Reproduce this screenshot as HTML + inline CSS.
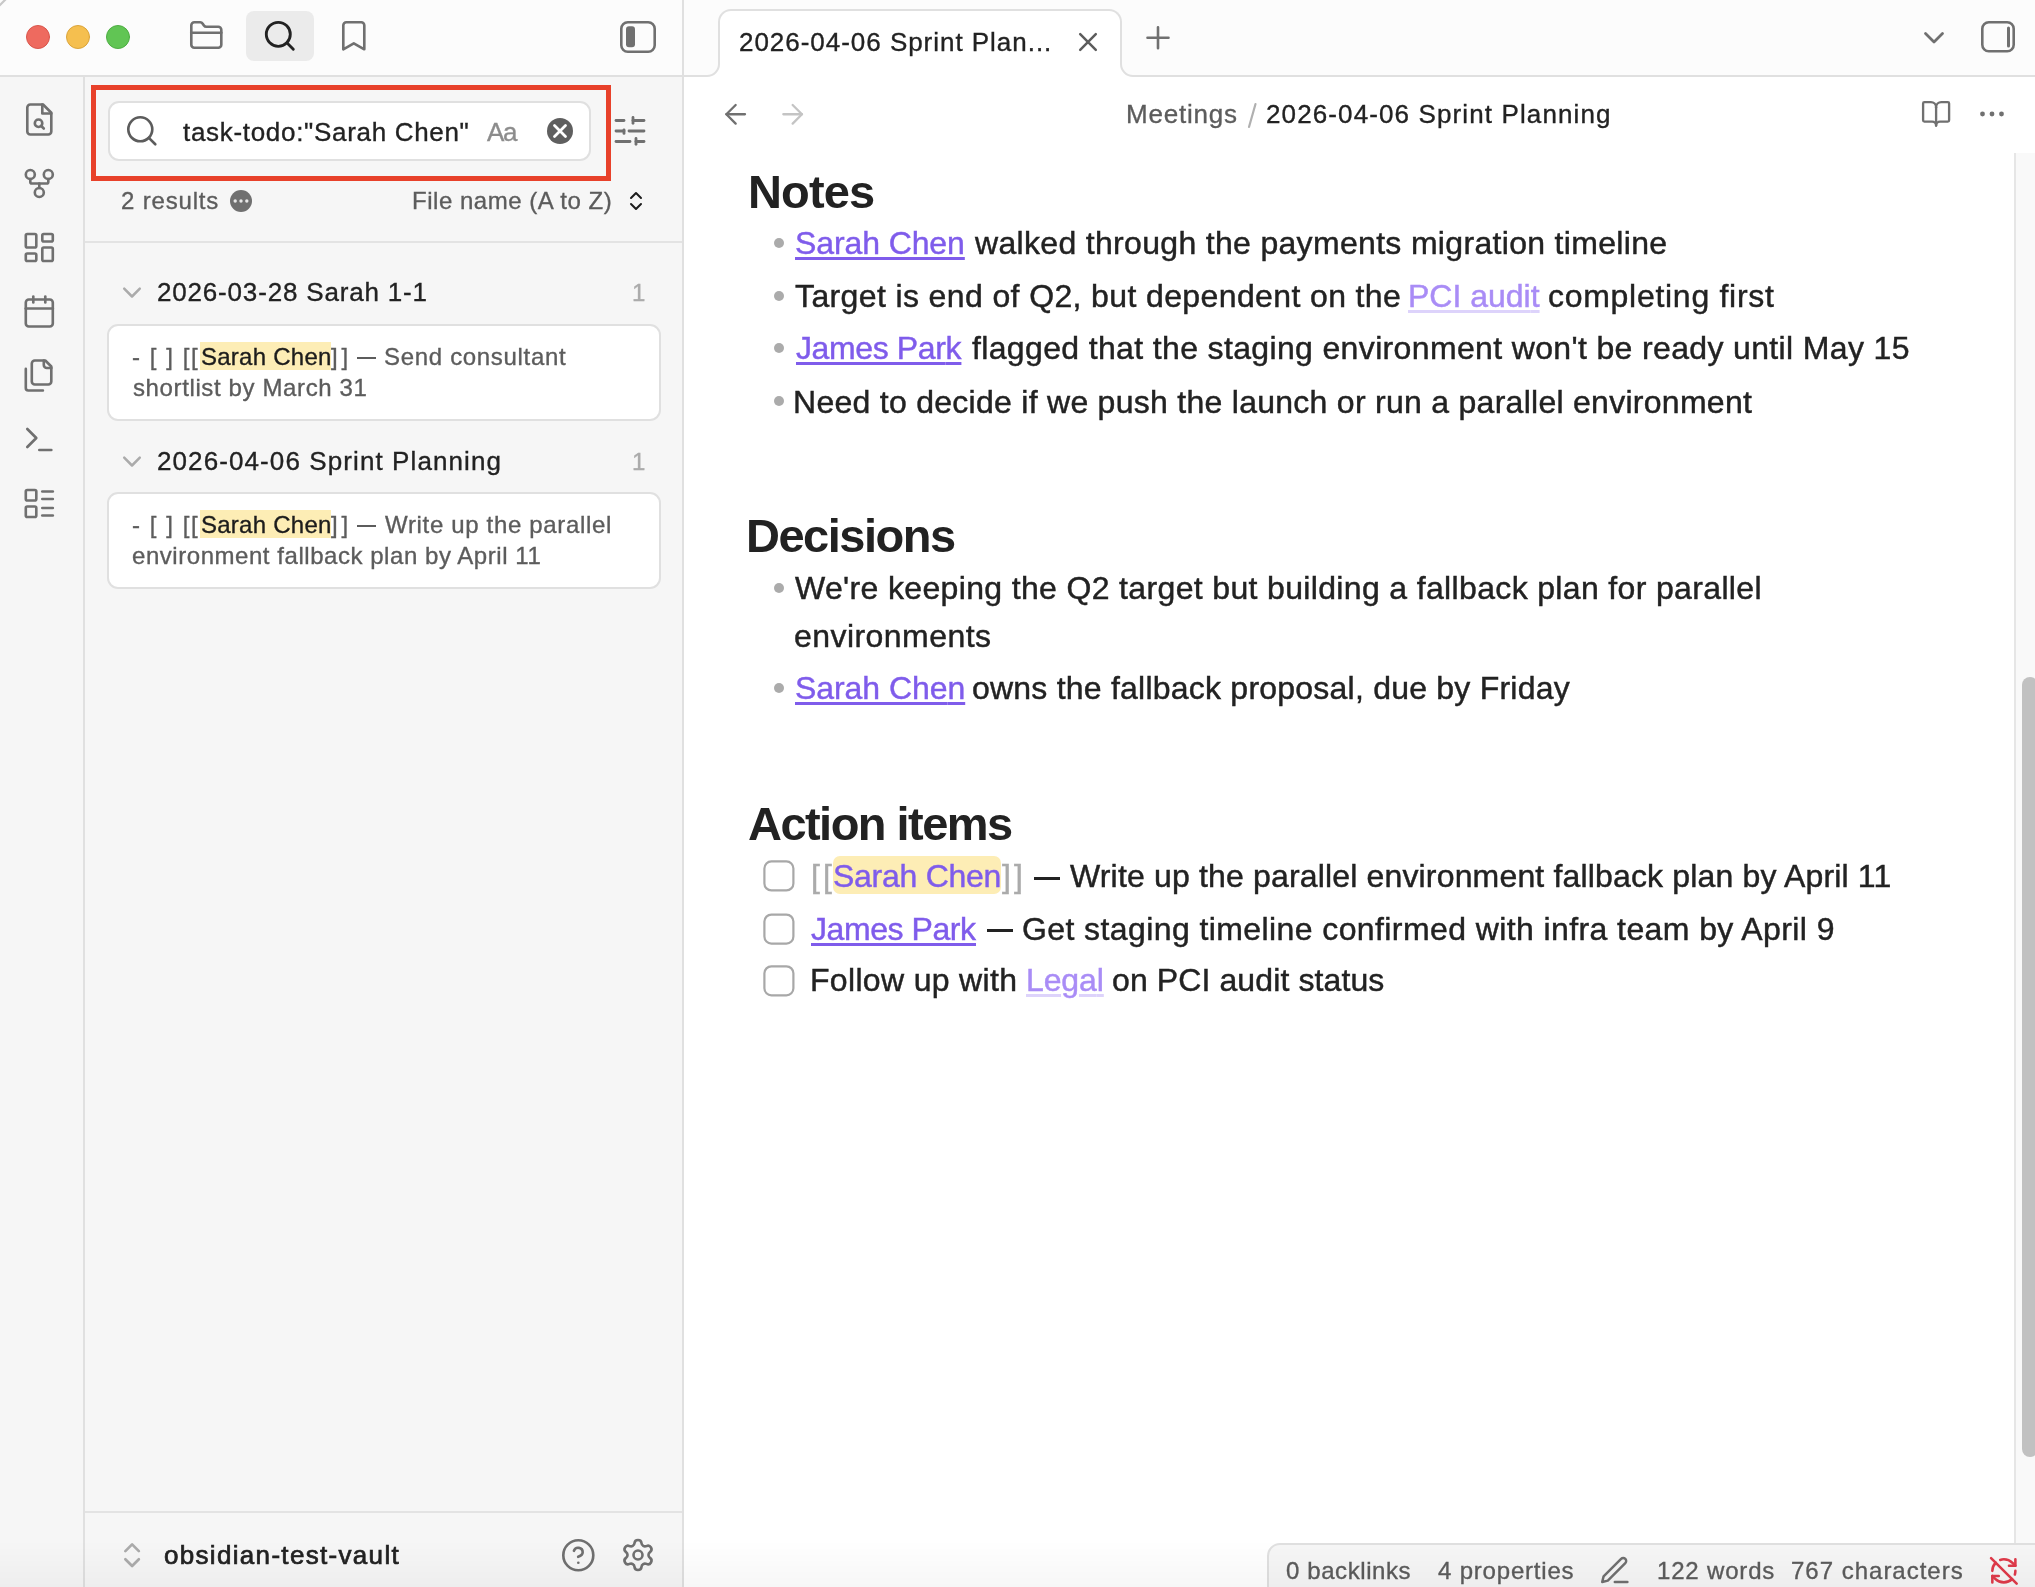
<!DOCTYPE html>
<html>
<head>
<meta charset="utf-8">
<style>
html,body{margin:0;padding:0;}
body{width:2035px;height:1587px;overflow:hidden;position:relative;background:#fff;font-family:"Liberation Sans",sans-serif;}
.a{position:absolute;box-sizing:border-box;}
.t{position:absolute;white-space:pre;font-family:"Liberation Sans",sans-serif;will-change:transform;}
svg.ov{position:absolute;left:0;top:0;width:2035px;height:1587px;}
</style>
</head>
<body>
<!-- top bar -->
<div class="a" style="left:0;top:0;width:2035px;height:76px;background:#fcfcfc;"></div>
<div class="a" style="left:0;top:75px;width:2035px;height:2px;background:#e0e0e0;"></div>
<!-- ribbon -->
<div class="a" style="left:0;top:77px;width:83px;height:1510px;background:#f6f6f6;"></div>
<div class="a" style="left:83px;top:77px;width:2px;height:1510px;background:#e0e0e0;"></div>
<!-- sidebar -->
<div class="a" style="left:85px;top:77px;width:597px;height:1510px;background:#f6f6f6;"></div>
<div class="a" style="left:682px;top:0;width:2px;height:1587px;background:#e0e0e0;"></div>
<div class="a" style="left:85px;top:241px;width:597px;height:2px;background:#e3e3e3;"></div>
<div class="a" style="left:85px;top:1511px;width:597px;height:2px;background:#e3e3e3;"></div>
<!-- search highlight button in top bar -->
<div class="a" style="left:246px;top:11px;width:68px;height:50px;background:#ebebeb;border-radius:8px;"></div>
<!-- red box -->
<div class="a" style="left:91px;top:85px;width:520px;height:96px;border:5px solid #e8412a;"></div>
<!-- search input -->
<div class="a" style="left:108px;top:101px;width:483px;height:60px;background:#fff;border:2px solid #e0e0e0;border-radius:11px;"></div>
<!-- result cards -->
<div class="a" style="left:107px;top:324px;width:554px;height:97px;background:#fff;border:2px solid #e0e0e0;border-radius:11px;"></div>
<div class="a" style="left:107px;top:492px;width:554px;height:97px;background:#fff;border:2px solid #e0e0e0;border-radius:11px;"></div>

<!-- tab -->
<div class="a" style="left:718px;top:9px;width:404px;height:80px;background:#fff;border:2px solid #e0e0e0;border-bottom:none;border-radius:13px 13px 0 0;"></div>
<div class="a" style="left:684px;top:77px;width:1351px;height:1510px;background:#fff;"></div>
<!-- scrollbar -->
<div class="a" style="left:2014px;top:153px;width:2px;height:1391px;background:#e6e6e6;"></div>
<div class="a" style="left:2016px;top:153px;width:19px;height:1391px;background:#f9f9f9;"></div>
<div class="a" style="left:2022px;top:677px;width:16px;height:780px;background:#c1c1c1;border-radius:8px;"></div>
<!-- status bar -->
<div class="a" style="left:1267px;top:1543px;width:780px;height:60px;background:#f6f6f6;border:2px solid #e0e0e0;border-radius:13px 0 0 0;"></div>

<svg class="ov" viewBox="0 0 2035 1587" fill="none" stroke-linecap="round" stroke-linejoin="round">
  <!-- tab bottom outward curves -->
  <path d="M705 77.5 L705 76 L707 76 A12 12 0 0 0 719 64 L720.5 64 L720.5 77.5 Z" fill="#fff" stroke="none"/>
  <path d="M1119.5 77.5 L1119.5 64 L1121 64 A12 12 0 0 0 1133 76 L1135 76 L1135 77.5 Z" fill="#fff" stroke="none"/>
  <path d="M700 76 L707 76 A12 12 0 0 0 719 64" stroke="#e0e0e0" stroke-width="2" stroke-linecap="butt" fill="none"/>
  <path d="M1121 64 A12 12 0 0 0 1133 76 L1140 76" stroke="#e0e0e0" stroke-width="2" stroke-linecap="butt" fill="none"/>
  <path d="M-1 6 L6 -1" stroke="#c8c8c8" stroke-width="2.2"/>
  <!-- traffic lights -->
  <circle cx="38" cy="37" r="11.5" fill="#ee6a5f" stroke="#d9574d" stroke-width="1"/>
  <circle cx="78" cy="37" r="11.5" fill="#f5bf4f" stroke="#dba53c" stroke-width="1"/>
  <circle cx="118" cy="37" r="11.5" fill="#61c554" stroke="#4fae44" stroke-width="1"/>
  <!-- top icons -->
  <g transform="translate(188.3,17.8) scale(1.5)" stroke="#707070" stroke-width="1.75">
    <path d="M20 20a2 2 0 0 0 2-2V8a2 2 0 0 0-2-2h-7.9a2 2 0 0 1-1.69-.9L9.6 3.9A2 2 0 0 0 7.93 3H4a2 2 0 0 0-2 2v13a2 2 0 0 0 2 2Z"/><path d="M2 10h20"/>
  </g>
  <g transform="translate(261.8,17.8) scale(1.5)" stroke="#222" stroke-width="1.9">
    <circle cx="11" cy="11" r="8"/><path d="m21 21-4.3-4.3"/>
  </g>
  <g transform="translate(335.8,17.8) scale(1.5)" stroke="#707070" stroke-width="1.75">
    <path d="m19 21-7-4-7 4V5a2 2 0 0 1 2-2h10a2 2 0 0 1 2 2v16z"/>
  </g>
  <!-- left sidebar toggle -->
  <rect x="621.3" y="22.3" width="33.4" height="29.4" rx="6.5" stroke="#707070" stroke-width="2.6"/>
  <rect x="626" y="26.3" width="9" height="21" rx="3" fill="#707070" stroke="none"/>
  <!-- tab close & plus -->
  <g transform="translate(1088,42)" stroke="#5c5c5c" stroke-width="2.5"><path d="M-7.8 -7.8 L7.8 7.8 M7.8 -7.8 L-7.8 7.8"/></g>
  <g transform="translate(1158,37.8)" stroke="#707070" stroke-width="2.6"><path d="M-10.5 0 H10.5 M0 -10.5 V10.5"/></g>
  <!-- tab list chevron -->
  <path d="M1925.5 33.5 L1934 42 L1942.5 33.5" stroke="#707070" stroke-width="2.8"/>
  <!-- right sidebar toggle -->
  <rect x="1982.3" y="22.3" width="31.4" height="29" rx="6.5" stroke="#707070" stroke-width="2.6"/>
  <path d="M2008.5 28 V46" stroke="#707070" stroke-width="3"/>

  <!-- ribbon icons -->
  <g stroke="#707070" stroke-width="1.75">
    <g transform="translate(21.3,101.5) scale(1.5)"><path d="M14.5 2H6a2 2 0 0 0-2 2v16a2 2 0 0 0 2 2h12a2 2 0 0 0 2-2V7.5L14.5 2z"/><polyline points="14 2 14 8 20 8"/><circle cx="11.5" cy="14.5" r="2.5"/><path d="M13.3 16.3 15 18"/></g>
    <g transform="translate(21.3,165.5) scale(1.5)"><circle cx="12" cy="18" r="3"/><circle cx="6" cy="6" r="3"/><circle cx="18" cy="6" r="3"/><path d="M18 9v2c0 .6-.4 1-1 1H7c-.6 0-1-.4-1-1V9"/><path d="M12 12v3"/></g>
    <g transform="translate(21.3,229.5) scale(1.5)"><rect width="7" height="9" x="3" y="3" rx="1"/><rect width="7" height="5" x="14" y="3" rx="1"/><rect width="7" height="9" x="14" y="12" rx="1"/><rect width="7" height="5" x="3" y="16" rx="1"/></g>
    <g transform="translate(21.3,293.5) scale(1.5)"><rect width="18" height="18" x="3" y="4" rx="2"/><path d="M16 2v4"/><path d="M8 2v4"/><path d="M3 10h18"/></g>
    <g transform="translate(21.3,357.5) scale(1.5)"><path d="M20 7h-3a2 2 0 0 1-2-2V2"/><path d="M9 18a2 2 0 0 1-2-2V4a2 2 0 0 1 2-2h7l4 4v10a2 2 0 0 1-2 2Z"/><path d="M3 7.6v12.8A1.6 1.6 0 0 0 4.6 22h9.8"/></g>
    <g transform="translate(21.3,421.5) scale(1.5)"><polyline points="4 17 10 11 4 5"/><path d="M12 19h8"/></g>
    <g transform="translate(21.3,485.5) scale(1.5)"><rect width="7" height="7" x="3" y="3" rx="1"/><rect width="7" height="7" x="3" y="14" rx="1"/><path d="M14 4h7"/><path d="M14 9h7"/><path d="M14 15h7"/><path d="M14 20h7"/></g>
  </g>

  <!-- search input icon -->
  <g transform="translate(123.8,112.8) scale(1.5)" stroke="#5c5c5c" stroke-width="1.75"><circle cx="11" cy="11" r="8"/><path d="m21 21-4.3-4.3"/></g>
  <!-- clear button -->
  <circle cx="560" cy="131" r="13" fill="#5f5f5f" stroke="none"/>
  <path d="M554.5 125.5 L565.5 136.5 M565.5 125.5 L554.5 136.5" stroke="#fff" stroke-width="2.8"/>
  <!-- filter sliders -->
  <g stroke="#707070" stroke-width="2.8">
    <path d="M616 120.5 H624"/><path d="M633 120.5 H644"/><path d="M633 117.5 V123.3"/>
    <path d="M616 131 H624"/><path d="M629 131 H644"/><path d="M624 129.8 V133.4"/>
    <path d="M616 141.5 H630"/><path d="M636 141.5 H644"/><path d="M636 138.4 V144.3"/>
  </g>
  <!-- results dots -->
  <circle cx="241" cy="201" r="11" fill="#707070" stroke="none"/>
  <circle cx="235.2" cy="201" r="1.7" fill="#e8e8e8" stroke="none"/>
  <circle cx="241" cy="201" r="1.7" fill="#e8e8e8" stroke="none"/>
  <circle cx="246.8" cy="201" r="1.7" fill="#e8e8e8" stroke="none"/>
  <!-- sort chevrons -->
  <g transform="translate(624,189)" stroke="#1c1c1c" stroke-width="2"><path d="m7 15 5 5 5-5"/><path d="m7 9 5-5 5 5"/></g>
  <!-- group chevrons -->
  <path d="M124.2 288.7 L132 296.5 L139.8 288.7" stroke="#ababab" stroke-width="2.5"/>
  <path d="M124.2 457.7 L132 465.5 L139.8 457.7" stroke="#ababab" stroke-width="2.5"/>
  <!-- vault switcher chevrons -->
  <g transform="translate(115.9,1539) scale(1.35)" stroke="#ababab" stroke-width="2"><path d="m7 15 5 5 5-5"/><path d="m7 9 5-5 5 5"/></g>
  <!-- help & settings -->
  <g transform="translate(560.3,1537.3) scale(1.5)" stroke="#707070" stroke-width="1.75"><circle cx="12" cy="12" r="10"/><path d="M9.09 9a3 3 0 0 1 5.83 1c0 2-3 3-3 3"/><path d="M12 17h.01"/></g>
  <g transform="translate(620,1537) scale(1.5)" stroke="#707070" stroke-width="1.75"><path d="M9.671 4.136a2.34 2.34 0 0 1 4.659 0 2.34 2.34 0 0 0 3.319 1.915 2.34 2.34 0 0 1 2.33 4.033 2.34 2.34 0 0 0 0 3.831 2.34 2.34 0 0 1-2.33 4.033 2.34 2.34 0 0 0-3.319 1.915 2.34 2.34 0 0 1-4.659 0 2.34 2.34 0 0 0-3.32-1.915 2.34 2.34 0 0 1-2.33-4.033 2.34 2.34 0 0 0 0-3.831A2.34 2.34 0 0 1 6.35 6.051a2.34 2.34 0 0 0 3.319-1.915"/><circle cx="12" cy="12" r="3"/></g>

  <!-- nav arrows -->
  <g transform="translate(719.7,98.3) scale(1.33)" stroke="#707070" stroke-width="1.75"><path d="m12 19-7-7 7-7"/><path d="M19 12H5"/></g>
  <g transform="translate(776.7,98.3) scale(1.33)" stroke="#c4c4c4" stroke-width="1.75"><path d="m12 5 7 7-7 7"/><path d="M5 12h14"/></g>
  <!-- breadcrumb slash -->
  <path d="M1249 127 L1255.5 104" stroke="#b0b0b0" stroke-width="2.2"/>
  <!-- book & more -->
  <g transform="translate(1920.5,98.2) scale(1.3)" stroke="#707070" stroke-width="1.8"><path d="M12 7v14"/><path d="M3 18a1 1 0 0 1-1-1V4a1 1 0 0 1 1-1h5a4 4 0 0 1 4 4 4 4 0 0 1 4-4h5a1 1 0 0 1 1 1v13a1 1 0 0 1-1 1h-6a3 3 0 0 0-3 3 3 3 0 0 0-3-3z"/></g>
  <circle cx="1982.5" cy="114" r="2.4" fill="#707070" stroke="none"/>
  <circle cx="1992" cy="114" r="2.4" fill="#707070" stroke="none"/>
  <circle cx="2001.5" cy="114" r="2.4" fill="#707070" stroke="none"/>

  <!-- bullets -->
  <g fill="#ababab" stroke="none">
    <circle cx="779" cy="243" r="5"/>
    <circle cx="779" cy="296" r="5"/>
    <circle cx="779" cy="348" r="5"/>
    <circle cx="779" cy="401" r="5"/>
    <circle cx="779" cy="588" r="5"/>
    <circle cx="779" cy="688" r="5"/>
  </g>
  <!-- checkboxes -->
  <g stroke="#a8a8a8" stroke-width="2.2" fill="#fff">
    <rect x="764.4" y="861.4" width="29" height="29" rx="7"/>
    <rect x="764.4" y="914.6" width="29" height="29" rx="7"/>
    <rect x="764.4" y="966.3" width="29" height="29" rx="7"/>
  </g>

  <!-- status bar icons -->
  <g transform="translate(1598,1554) scale(1.4)" stroke="#707070" stroke-width="1.75"><path d="M12 20h9"/><path d="M16.5 3.5a2.121 2.121 0 0 1 3 3L7 19l-4 1 1-4L16.5 3.5z"/></g>
  <g transform="translate(1988.5,1555.5) scale(1.28)" stroke="#e03a4a" stroke-width="2"><path d="M21 8L18.74 5.74A9.75 9.75 0 0 0 12 3C11 3 10.03 3.16 9.13 3.47"/><path d="M8 16H3v5"/><path d="M3 12C3 9.51 4 7.26 5.64 5.64"/><path d="m3 16 2.26 2.26A9.75 9.75 0 0 0 12 21c2.49 0 4.74-1 6.36-2.64"/><path d="M21 12c0 1.01-.15 1.97-.42 2.88"/><path d="M21 3v5h-5"/><path d="M22 22 2 2"/></g>
</svg>

<div class="a" style="left:200px;top:342px;width:131px;height:28px;background:#fdedb5;"></div>
<div class="a" style="left:200px;top:510px;width:131px;height:28px;background:#fdedb5;"></div>
<div class="a" style="left:833px;top:856px;width:168px;height:38px;background:#fdedb5;border-radius:7px;"></div>
<div class="t" style="left:738.80px;top:26.09px;font-size:26px;line-height:32px;font-weight:400;color:#222;letter-spacing:0.969px;-webkit-text-stroke-width:0.35px;">2026-04-06 Sprint Plan...</div>
<div class="t" style="left:1126.00px;top:97.79px;font-size:26px;line-height:32px;font-weight:400;color:#5c5c5c;letter-spacing:0.786px;-webkit-text-stroke-width:0.35px;">Meetings</div>
<div class="t" style="left:1266.00px;top:97.79px;font-size:26px;line-height:32px;font-weight:400;color:#222;letter-spacing:1.116px;-webkit-text-stroke-width:0.35px;">2026-04-06 Sprint Planning</div>
<div class="t" style="left:183.40px;top:115.79px;font-size:26px;line-height:32px;font-weight:400;color:#222;letter-spacing:0.688px;-webkit-text-stroke-width:0.35px;">task-todo:&quot;Sarah Chen&quot;</div>
<div class="t" style="left:487.00px;top:115.99px;font-size:26px;line-height:32px;font-weight:400;color:#8c8c8c;letter-spacing:-1.342px;-webkit-text-stroke-width:0.35px;">Aa</div>
<div class="t" style="left:120.70px;top:185.68px;font-size:24px;line-height:30px;font-weight:400;color:#5c5c5c;letter-spacing:0.825px;-webkit-text-stroke-width:0.35px;">2 results</div>
<div class="t" style="left:412.00px;top:185.68px;font-size:24px;line-height:30px;font-weight:400;color:#5c5c5c;letter-spacing:0.526px;-webkit-text-stroke-width:0.35px;">File name (A to Z)</div>
<div class="t" style="left:156.50px;top:275.99px;font-size:26px;line-height:32px;font-weight:400;color:#222;letter-spacing:0.819px;-webkit-text-stroke-width:0.35px;">2026-03-28 Sarah 1-1</div>
<div class="t" style="left:631.50px;top:277.68px;font-size:24px;line-height:30px;font-weight:400;color:#ababab;letter-spacing:0.000px;-webkit-text-stroke-width:0.35px;">1</div>
<div class="t" style="left:156.50px;top:444.99px;font-size:26px;line-height:32px;font-weight:400;color:#222;letter-spacing:1.096px;-webkit-text-stroke-width:0.35px;">2026-04-06 Sprint Planning</div>
<div class="t" style="left:631.50px;top:446.68px;font-size:24px;line-height:30px;font-weight:400;color:#ababab;letter-spacing:0.000px;-webkit-text-stroke-width:0.35px;">1</div>
<div class="t" style="left:164.00px;top:1538.69px;font-size:26px;line-height:32px;font-weight:400;color:#222;letter-spacing:1.318px;-webkit-text-stroke:0.7px #222;">obsidian-test-vault</div>
<div class="t" style="left:132.00px;top:341.68px;font-size:24px;line-height:30px;font-weight:400;color:#5c5c5c;letter-spacing:1.571px;-webkit-text-stroke-width:0.35px;">- [ ] [[</div>
<div class="t" style="left:200.50px;top:341.68px;font-size:24px;line-height:30px;font-weight:400;color:#1c1c1c;letter-spacing:0.251px;-webkit-text-stroke-width:0.35px;">Sarah Chen</div>
<div class="t" style="left:331.40px;top:341.68px;font-size:24px;line-height:30px;font-weight:400;color:#5c5c5c;letter-spacing:3.932px;-webkit-text-stroke-width:0.35px;">]]</div>
<div class="t" style="left:384.00px;top:341.68px;font-size:24px;line-height:30px;font-weight:400;color:#5c5c5c;letter-spacing:0.682px;-webkit-text-stroke-width:0.35px;">Send consultant</div>
<div class="t" style="left:133.00px;top:372.68px;font-size:24px;line-height:30px;font-weight:400;color:#5c5c5c;letter-spacing:0.622px;-webkit-text-stroke-width:0.35px;">shortlist by March 31</div>
<div class="t" style="left:132.00px;top:509.68px;font-size:24px;line-height:30px;font-weight:400;color:#5c5c5c;letter-spacing:1.571px;-webkit-text-stroke-width:0.35px;">- [ ] [[</div>
<div class="t" style="left:200.50px;top:509.68px;font-size:24px;line-height:30px;font-weight:400;color:#1c1c1c;letter-spacing:0.251px;-webkit-text-stroke-width:0.35px;">Sarah Chen</div>
<div class="t" style="left:331.40px;top:509.68px;font-size:24px;line-height:30px;font-weight:400;color:#5c5c5c;letter-spacing:3.932px;-webkit-text-stroke-width:0.35px;">]]</div>
<div class="t" style="left:385.00px;top:509.68px;font-size:24px;line-height:30px;font-weight:400;color:#5c5c5c;letter-spacing:0.667px;-webkit-text-stroke-width:0.35px;">Write up the parallel</div>
<div class="t" style="left:132.00px;top:540.68px;font-size:24px;line-height:30px;font-weight:400;color:#5c5c5c;letter-spacing:0.545px;-webkit-text-stroke-width:0.35px;">environment fallback plan by April 11</div>
<div class="t" style="left:748.00px;top:162.21px;font-size:47px;line-height:59px;font-weight:700;color:#222;letter-spacing:-0.860px;">Notes</div>
<div class="t" style="left:746.00px;top:505.61px;font-size:47px;line-height:59px;font-weight:700;color:#222;letter-spacing:-1.487px;">Decisions</div>
<div class="t" style="left:748.00px;top:793.91px;font-size:47px;line-height:59px;font-weight:700;color:#222;letter-spacing:-1.537px;">Action items</div>
<div class="t" style="left:795.00px;top:223.21px;font-size:32px;line-height:40px;font-weight:400;color:#7f5ceb;letter-spacing:-0.109px;-webkit-text-stroke-width:0.45px;text-decoration:underline;text-decoration-thickness:2.6px;text-underline-offset:3px;">Sarah Che<span style="letter-spacing:0">n</span></div>
<div class="t" style="left:974.50px;top:223.21px;font-size:32px;line-height:40px;font-weight:400;color:#222;letter-spacing:0.320px;-webkit-text-stroke-width:0.45px;">walked through the payments migration timeline</div>
<div class="t" style="left:795.00px;top:276.31px;font-size:32px;line-height:40px;font-weight:400;color:#222;letter-spacing:0.379px;-webkit-text-stroke-width:0.45px;">Target is end of Q2, but dependent on the</div>
<div class="t" style="left:1407.60px;top:276.31px;font-size:32px;line-height:40px;font-weight:400;color:#a98cf6;letter-spacing:-0.004px;-webkit-text-stroke-width:0.45px;text-decoration:underline;text-decoration-color:#ddd3fb;text-decoration-thickness:2.6px;text-underline-offset:3px;">PCI audi<span style="letter-spacing:0">t</span></div>
<div class="t" style="left:1548.00px;top:276.31px;font-size:32px;line-height:40px;font-weight:400;color:#222;letter-spacing:0.714px;-webkit-text-stroke-width:0.45px;">completing first</div>
<div class="t" style="left:795.60px;top:327.91px;font-size:32px;line-height:40px;font-weight:400;color:#7f5ceb;letter-spacing:-0.393px;-webkit-text-stroke-width:0.45px;text-decoration:underline;text-decoration-thickness:2.6px;text-underline-offset:3px;">James Par<span style="letter-spacing:0">k</span></div>
<div class="t" style="left:971.80px;top:327.91px;font-size:32px;line-height:40px;font-weight:400;color:#222;letter-spacing:0.355px;-webkit-text-stroke-width:0.45px;">flagged that the staging environment won&#x27;t be ready until May 15</div>
<div class="t" style="left:793.00px;top:381.71px;font-size:32px;line-height:40px;font-weight:400;color:#222;letter-spacing:0.275px;-webkit-text-stroke-width:0.45px;">Need to decide if we push the launch or run a parallel environment</div>
<div class="t" style="left:795.00px;top:568.21px;font-size:32px;line-height:40px;font-weight:400;color:#222;letter-spacing:0.347px;-webkit-text-stroke-width:0.45px;">We&#x27;re keeping the Q2 target but building a fallback plan for parallel</div>
<div class="t" style="left:794.00px;top:616.11px;font-size:32px;line-height:40px;font-weight:400;color:#222;letter-spacing:0.446px;-webkit-text-stroke-width:0.45px;">environments</div>
<div class="t" style="left:794.60px;top:668.31px;font-size:32px;line-height:40px;font-weight:400;color:#7f5ceb;letter-spacing:-0.065px;-webkit-text-stroke-width:0.45px;text-decoration:underline;text-decoration-thickness:2.6px;text-underline-offset:3px;">Sarah Che<span style="letter-spacing:0">n</span></div>
<div class="t" style="left:971.80px;top:668.31px;font-size:32px;line-height:40px;font-weight:400;color:#222;letter-spacing:0.223px;-webkit-text-stroke-width:0.45px;">owns the fallback proposal, due by Friday</div>
<div class="t" style="left:811.30px;top:855.91px;font-size:32px;line-height:40px;font-weight:400;color:#ababab;letter-spacing:3.209px;-webkit-text-stroke-width:0.45px;">[[</div>
<div class="t" style="left:833.20px;top:855.91px;font-size:32px;line-height:40px;font-weight:400;color:#7f5ceb;letter-spacing:-0.265px;-webkit-text-stroke-width:0.45px;">Sarah Chen</div>
<div class="t" style="left:1002.00px;top:855.91px;font-size:32px;line-height:40px;font-weight:400;color:#ababab;letter-spacing:3.109px;-webkit-text-stroke-width:0.45px;">]]</div>
<div class="t" style="left:1069.80px;top:855.91px;font-size:32px;line-height:40px;font-weight:400;color:#222;letter-spacing:0.164px;-webkit-text-stroke-width:0.45px;">Write up the parallel environment fallback plan by April 11</div>
<div class="t" style="left:811.00px;top:908.51px;font-size:32px;line-height:40px;font-weight:400;color:#7f5ceb;letter-spacing:-0.438px;-webkit-text-stroke-width:0.45px;text-decoration:underline;text-decoration-thickness:2.6px;text-underline-offset:3px;">James Par<span style="letter-spacing:0">k</span></div>
<div class="t" style="left:1021.60px;top:908.51px;font-size:32px;line-height:40px;font-weight:400;color:#222;letter-spacing:0.406px;-webkit-text-stroke-width:0.45px;">Get staging timeline confirmed with infra team by April 9</div>
<div class="t" style="left:809.80px;top:960.41px;font-size:32px;line-height:40px;font-weight:400;color:#222;letter-spacing:0.327px;-webkit-text-stroke-width:0.45px;">Follow up with</div>
<div class="t" style="left:1025.50px;top:960.41px;font-size:32px;line-height:40px;font-weight:400;color:#a98cf6;letter-spacing:-0.122px;-webkit-text-stroke-width:0.45px;text-decoration:underline;text-decoration-color:#ddd3fb;text-decoration-thickness:2.6px;text-underline-offset:3px;">Lega<span style="letter-spacing:0">l</span></div>
<div class="t" style="left:1112.00px;top:960.41px;font-size:32px;line-height:40px;font-weight:400;color:#222;letter-spacing:0.107px;-webkit-text-stroke-width:0.45px;">on PCI audit status</div>
<div class="t" style="left:1286.40px;top:1555.68px;font-size:24px;line-height:30px;font-weight:400;color:#5c5c5c;letter-spacing:0.588px;-webkit-text-stroke-width:0.35px;">0 backlinks</div>
<div class="t" style="left:1437.70px;top:1555.68px;font-size:24px;line-height:30px;font-weight:400;color:#5c5c5c;letter-spacing:0.806px;-webkit-text-stroke-width:0.35px;">4 properties</div>
<div class="t" style="left:1657.00px;top:1555.68px;font-size:24px;line-height:30px;font-weight:400;color:#5c5c5c;letter-spacing:0.821px;-webkit-text-stroke-width:0.35px;">122 words</div>
<div class="t" style="left:1791.00px;top:1555.68px;font-size:24px;line-height:30px;font-weight:400;color:#5c5c5c;letter-spacing:0.996px;-webkit-text-stroke-width:0.35px;">767 characters</div>
<div class="a" style="left:1034px;top:877.3px;width:26px;height:2.9px;background:#222;"></div>
<div class="a" style="left:986.6px;top:929px;width:26px;height:2.9px;background:#222;"></div>
<div class="a" style="left:357.3px;top:357px;width:19px;height:2.4px;background:#5c5c5c;"></div>
<div class="a" style="left:356.8px;top:525px;width:19px;height:2.4px;background:#5c5c5c;"></div>
<div class="a" style="left:0;top:1540px;width:2035px;height:47px;background:linear-gradient(rgba(0,0,0,0),rgba(0,0,0,0.03));"></div>
</body>
</html>
